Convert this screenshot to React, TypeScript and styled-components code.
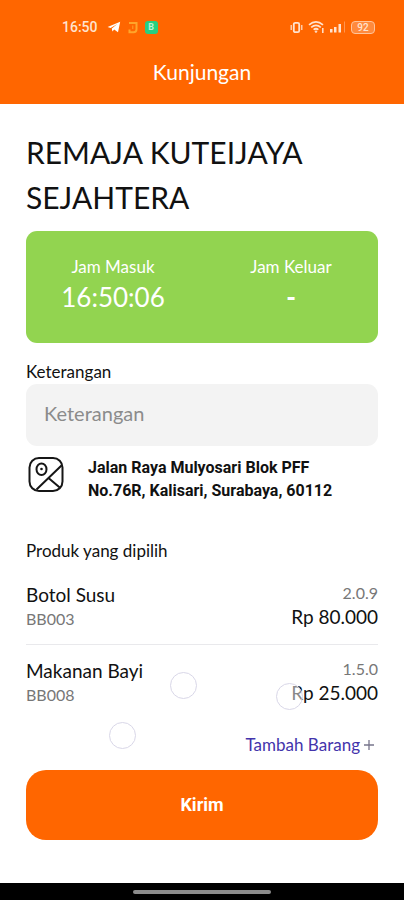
import React from "react";
import styled, { createGlobalStyle } from "styled-components";

const GlobalStyle = createGlobalStyle`
  *, *::before, *::after { box-sizing: border-box; }
  body { margin: 0; background: #fff; }
  h1, h2, p, ul { margin: 0; padding: 0; font-weight: 400; }
  button, input { font: inherit; }
`;

const Screen = styled.div`
  min-height: 100vh;
  display: flex;
  flex-direction: column;
  color: #111;
  font-family: Lato, "Liberation Sans", sans-serif;
  font-size: 17px;
`;

const Header = styled.header`
  background: #ff6600;
  color: #fff;
  padding-bottom: 16px;
`;

const StatusBar = styled.div`
  height: 56px;
  padding: 0 29px 2px 62px;
  display: flex;
  align-items: center;
  justify-content: space-between;
  color: #ffe3cf;
`;

const StatusGroup = styled.div<{ $gap: number }>`
  display: flex;
  align-items: center;
  gap: ${(p) => p.$gap}px;
`;

const Clock = styled.time`
  font-family: Roboto, sans-serif;
  font-size: 14px;
  font-weight: 500;
  margin-right: 2px;
`;

const AppBadge = styled.span`
  width: 13px;
  height: 13px;
  border-radius: 3px;
  background: #27cf80;
  color: #b8f5d6;
  font: 700 9px/13px Roboto, sans-serif;
  text-align: center;
`;

const Battery = styled.span`
  width: 24px;
  height: 13px;
  border: 1px solid #ffc49a;
  border-radius: 4px;
  background: #ff8a3d;
  font: 500 10px/11px Roboto, sans-serif;
  text-align: center;
`;

const Title = styled.h2`
  font-size: 21px;
  line-height: 32px;
  text-align: center;
`;

const Main = styled.main`
  flex: 1;
  display: flex;
  flex-direction: column;
  padding: 26px 26px 42px;
`;

const StoreName = styled.h1`
  font-size: 30px;
  line-height: 45px;
`;

const TimeCard = styled.section`
  display: grid;
  grid-template-columns: 1fr 1fr;
  gap: 4px;
  margin-top: 11px;
  padding: 24px 0 28px;
  border-radius: 11px;
  background: #92d450;
  color: #fff;
  text-align: center;
`;

const TimeLabel = styled.p`
  font-size: 17px;
  line-height: 24px;
`;

const TimeValue = styled.p<{ $empty?: boolean }>`
  font-size: 26px;
  font-weight: ${(p) => (p.$empty ? 900 : 400)};
  line-height: 36px;
`;

const FieldLabel = styled.label`
  margin-top: 16px;
  font-size: 17px;
  line-height: 25px;
`;

const NoteInput = styled.input`
  width: 100%;
  height: 62px;
  padding: 0 18px 4px;
  border: 0;
  border-radius: 11px;
  background: #f3f3f3;
  color: #111;
  font-size: 20px;
  &::placeholder { color: #8b8b8b; opacity: 1; }
`;

const Address = styled.address`
  display: flex;
  align-items: flex-start;
  gap: 22px;
  margin-top: 10px;
  font: 700 16px/23px Roboto, sans-serif;
  svg { flex: none; }
`;

const ListTitle = styled.h2`
  margin-top: 37px;
  font-size: 17px;
  line-height: 24px;
`;

const Products = styled.div`
  position: relative;
  margin-top: 18px;
`;

const ProductList = styled.ul`
  list-style: none;
`;

const ProductRow = styled.li`
  display: flex;
  justify-content: space-between;
  padding-bottom: 13px;
  & + & {
    border-top: 1px solid #e9e9ec;
    padding-top: 12px;
  }
`;

const ProductSide = styled.div<{ $align: "left" | "right" }>`
  padding-top: ${(p) => (p.$align === "left" ? 2 : 0)}px;
  text-align: ${(p) => p.$align};
`;

const Strong = styled.p`
  font-size: 19px;
  line-height: 24px;
`;

const Muted = styled.p`
  color: #777;
  font-size: 16px;
  line-height: 24px;
`;

const Ripple = styled.span<{ $x: number; $y: number }>`
  position: absolute;
  left: ${(p) => p.$x}px;
  top: ${(p) => p.$y}px;
  width: 27px;
  height: 27px;
  border: 1px solid #d9d7e8;
  border-radius: 50%;
  background: rgba(255, 255, 255, 0.5);
  pointer-events: none;
`;

const AddButton = styled.button`
  align-self: flex-end;
  display: flex;
  align-items: center;
  gap: 4px;
  margin-top: 12px;
  padding: 0 4px 0 0;
  border: 0;
  background: none;
  color: #4334ac;
  font-size: 17px;
  line-height: 26px;
`;

const SubmitButton = styled.button`
  width: 100%;
  height: 70px;
  margin-top: 12px;
  border: 0;
  border-radius: 20px;
  background: #ff6600;
  color: #fff;
  font: 700 18px/24px Roboto, sans-serif;
`;

const NavBar = styled.footer`
  display: flex;
  justify-content: center;
  align-items: center;
  height: 17px;
  background: #000;
`;

const NavHandle = styled.span`
  width: 34%;
  height: 4px;
  border-radius: 2px;
  background: #8c8c8c;
`;

const TelegramIcon = () => (
  <svg width="14" height="12" viewBox="0 0 14 12" aria-hidden="true">
    <path d="M.6 6 13.2.8 11 11.2 7.2 8.4 5.4 10.4 4.8 7.4 10.4 3 3.6 6.9Z" fill="#fff" />
  </svg>
);

const JIcon = () => (
  <svg width="10" height="13" viewBox="0 0 10 13" fill="none" aria-hidden="true">
    <path d="M1 2h7.5v6.2a3 3 0 0 1-3 3H1.5V8.4" stroke="#ffa52a" strokeWidth="2" />
    <path d="M4.8 4.5v3.6" stroke="#ffa52a" />
  </svg>
);

const VibrateIcon = () => (
  <svg width="13" height="13" viewBox="0 0 13 13" fill="none" stroke="#ffe3cf" aria-hidden="true">
    <rect x="3.8" y="1.8" width="5.4" height="9.4" rx="1.5" strokeWidth="1.8" />
    <path d="M1.2 4v5M11.8 4v5" strokeWidth="1.2" />
  </svg>
);

const WifiIcon = () => (
  <svg width="17" height="14" viewBox="0 0 17 14" fill="none" stroke="#ffe3cf" strokeWidth="1.7" aria-hidden="true">
    <path d="M1 4.8Q8 -1.2 15 4.8M3.2 7.3Q8 3.3 12.8 7.3M5.6 9.7Q8 7.8 10.4 9.7" />
    <circle cx="8" cy="11.6" r=".8" fill="#ffe3cf" strokeWidth="1" />
    <path d="M14.8 8v5" strokeWidth="1.5" />
  </svg>
);

const SignalIcon = () => (
  <svg width="16" height="12" viewBox="0 0 16 12" aria-hidden="true">
    <path d="M0 8h2.5v3.5H0zM4 6h2.5v5.5H4zM8.5 3H11v8.5H8.5z" fill="#ffe3cf" />
    <path d="M14 .5h1v11h-1z" fill="#ff9550" />
  </svg>
);

const MapIcon = () => (
  <svg width="40" height="38" viewBox="0 0 40 38" fill="none" stroke="#161616" strokeWidth="2" aria-hidden="true">
    <rect x="3.5" y="2" width="33" height="33" rx="9.5" />
    <path d="M10.5 33.5 35.5 9.5M22.5 22 34 31.8" />
    <ellipse cx="15.5" cy="13.3" rx="5" ry="5.8" />
    <circle cx="15.5" cy="13" r="1.3" fill="#161616" stroke="none" />
  </svg>
);

const PlusIcon = () => (
  <svg width="10" height="10" viewBox="0 0 10 10" stroke="#77758c" strokeWidth="1.3" aria-hidden="true">
    <path d="M5 0v10M0 5h10" />
  </svg>
);

const products = [
  { name: "Botol Susu", code: "BB003", qty: "2.0.9", price: "Rp 80.000" },
  { name: "Makanan Bayi", code: "BB008", qty: "1.5.0", price: "Rp 25.000" },
];

const ripples = [
  { x: 144, y: 91 },
  { x: 250, y: 102 },
  { x: 83, y: 141 },
];

export default function App() {
  return (
    <Screen>
      <GlobalStyle />
      <Header>
        <StatusBar>
          <StatusGroup $gap={7}>
            <Clock>16:50</Clock>
            <TelegramIcon />
            <JIcon />
            <AppBadge>B</AppBadge>
          </StatusGroup>
          <StatusGroup $gap={5}>
            <VibrateIcon />
            <WifiIcon />
            <SignalIcon />
            <Battery>92</Battery>
          </StatusGroup>
        </StatusBar>
        <Title>Kunjungan</Title>
      </Header>
      <Main>
        <StoreName>REMAJA KUTEIJAYA SEJAHTERA</StoreName>
        <TimeCard>
          <div>
            <TimeLabel>Jam Masuk</TimeLabel>
            <TimeValue>16:50:06</TimeValue>
          </div>
          <div>
            <TimeLabel>Jam Keluar</TimeLabel>
            <TimeValue $empty>-</TimeValue>
          </div>
        </TimeCard>
        <FieldLabel htmlFor="keterangan">Keterangan</FieldLabel>
        <NoteInput id="keterangan" type="text" placeholder="Keterangan" />
        <Address>
          <MapIcon />
          <span>
            Jalan Raya Mulyosari Blok PFF
            <br />
            No.76R, Kalisari, Surabaya, 60112
          </span>
        </Address>
        <ListTitle>Produk yang dipilih</ListTitle>
        <Products>
          <ProductList>
            {products.map((p) => (
              <ProductRow key={p.code}>
                <ProductSide $align="left">
                  <Strong>{p.name}</Strong>
                  <Muted>{p.code}</Muted>
                </ProductSide>
                <ProductSide $align="right">
                  <Muted>{p.qty}</Muted>
                  <Strong>{p.price}</Strong>
                </ProductSide>
              </ProductRow>
            ))}
          </ProductList>
          {ripples.map((r) => (
            <Ripple key={r.x} $x={r.x} $y={r.y} />
          ))}
        </Products>
        <AddButton type="button">
          Tambah Barang
          <PlusIcon />
        </AddButton>
        <SubmitButton type="button">Kirim</SubmitButton>
      </Main>
      <NavBar>
        <NavHandle />
      </NavBar>
    </Screen>
  );
}
